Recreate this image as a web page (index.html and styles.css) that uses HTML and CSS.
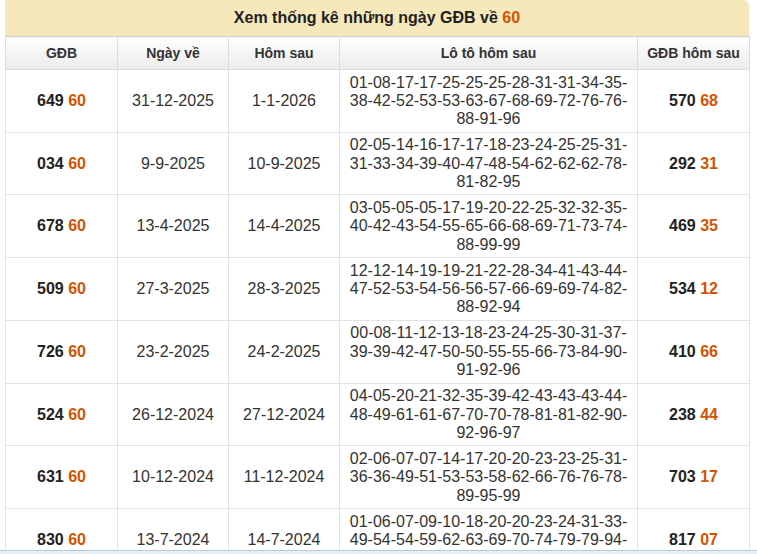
FILE: index.html
```html
<!DOCTYPE html>
<html lang="vi">
<head>
<meta charset="utf-8">
<link rel="stylesheet" href="styles.css">
</head>
<body>
<div class="wrap">
  <div class="title">Xem thống kê những ngày GĐB về <span class="hl">60</span></div>
  <table class="stats">
    <colgroup>
      <col class="c1"><col class="c2"><col class="c3"><col class="c4"><col class="c5">
    </colgroup>
    <thead>
      <tr><th>GĐB</th><th>Ngày về</th><th>Hôm sau</th><th>Lô tô hôm sau</th><th>GĐB hôm sau</th></tr>
    </thead>
    <tbody>
      <tr><td class="b">649 <span class="hl">60</span></td><td>31-12-2025</td><td>1-1-2026</td><td>01-<wbr>08-<wbr>17-<wbr>17-<wbr>25-<wbr>25-<wbr>25-<wbr>28-<wbr>31-<wbr>31-<wbr>34-<wbr>35-<wbr>38-<wbr>42-<wbr>52-<wbr>53-<wbr>53-<wbr>63-<wbr>67-<wbr>68-<wbr>69-<wbr>72-<wbr>76-<wbr>76-<wbr>88-<wbr>91-<wbr>96</td><td class="b">570 <span class="hl">68</span></td></tr>
      <tr><td class="b">034 <span class="hl">60</span></td><td>9-9-2025</td><td>10-9-2025</td><td>02-<wbr>05-<wbr>14-<wbr>16-<wbr>17-<wbr>17-<wbr>18-<wbr>23-<wbr>24-<wbr>25-<wbr>25-<wbr>31-<wbr>31-<wbr>33-<wbr>34-<wbr>39-<wbr>40-<wbr>47-<wbr>48-<wbr>54-<wbr>62-<wbr>62-<wbr>62-<wbr>78-<wbr>81-<wbr>82-<wbr>95</td><td class="b">292 <span class="hl">31</span></td></tr>
      <tr><td class="b">678 <span class="hl">60</span></td><td>13-4-2025</td><td>14-4-2025</td><td>03-<wbr>05-<wbr>05-<wbr>05-<wbr>17-<wbr>19-<wbr>20-<wbr>22-<wbr>25-<wbr>32-<wbr>32-<wbr>35-<wbr>40-<wbr>42-<wbr>43-<wbr>54-<wbr>55-<wbr>65-<wbr>66-<wbr>68-<wbr>69-<wbr>71-<wbr>73-<wbr>74-<wbr>88-<wbr>99-<wbr>99</td><td class="b">469 <span class="hl">35</span></td></tr>
      <tr><td class="b">509 <span class="hl">60</span></td><td>27-3-2025</td><td>28-3-2025</td><td>12-<wbr>12-<wbr>14-<wbr>19-<wbr>19-<wbr>21-<wbr>22-<wbr>28-<wbr>34-<wbr>41-<wbr>43-<wbr>44-<wbr>47-<wbr>52-<wbr>53-<wbr>54-<wbr>56-<wbr>56-<wbr>57-<wbr>66-<wbr>69-<wbr>69-<wbr>74-<wbr>82-<wbr>88-<wbr>92-<wbr>94</td><td class="b">534 <span class="hl">12</span></td></tr>
      <tr><td class="b">726 <span class="hl">60</span></td><td>23-2-2025</td><td>24-2-2025</td><td>00-<wbr>08-<wbr>11-<wbr>12-<wbr>13-<wbr>18-<wbr>23-<wbr>24-<wbr>25-<wbr>30-<wbr>31-<wbr>37-<wbr>39-<wbr>39-<wbr>42-<wbr>47-<wbr>50-<wbr>50-<wbr>55-<wbr>55-<wbr>66-<wbr>73-<wbr>84-<wbr>90-<wbr>91-<wbr>92-<wbr>96</td><td class="b">410 <span class="hl">66</span></td></tr>
      <tr><td class="b">524 <span class="hl">60</span></td><td>26-12-2024</td><td>27-12-2024</td><td>04-<wbr>05-<wbr>20-<wbr>21-<wbr>32-<wbr>35-<wbr>39-<wbr>42-<wbr>43-<wbr>43-<wbr>43-<wbr>44-<wbr>48-<wbr>49-<wbr>61-<wbr>61-<wbr>67-<wbr>70-<wbr>70-<wbr>78-<wbr>81-<wbr>81-<wbr>82-<wbr>90-<wbr>92-<wbr>96-<wbr>97</td><td class="b">238 <span class="hl">44</span></td></tr>
      <tr><td class="b">631 <span class="hl">60</span></td><td>10-12-2024</td><td>11-12-2024</td><td>02-<wbr>06-<wbr>07-<wbr>07-<wbr>14-<wbr>17-<wbr>20-<wbr>20-<wbr>23-<wbr>23-<wbr>25-<wbr>31-<wbr>36-<wbr>36-<wbr>49-<wbr>51-<wbr>53-<wbr>53-<wbr>58-<wbr>62-<wbr>66-<wbr>76-<wbr>76-<wbr>78-<wbr>89-<wbr>95-<wbr>99</td><td class="b">703 <span class="hl">17</span></td></tr>
      <tr><td class="b">830 <span class="hl">60</span></td><td>13-7-2024</td><td>14-7-2024</td><td>01-<wbr>06-<wbr>07-<wbr>09-<wbr>10-<wbr>18-<wbr>20-<wbr>20-<wbr>23-<wbr>24-<wbr>31-<wbr>33-<wbr>49-<wbr>54-<wbr>54-<wbr>59-<wbr>62-<wbr>63-<wbr>69-<wbr>70-<wbr>74-<wbr>79-<wbr>79-<wbr>94-<wbr>95-<wbr>97-<wbr>99</td><td class="b">817 <span class="hl">07</span></td></tr>
    </tbody>
  </table>
</div>
<div class="bottombar"></div>
</body>
</html>
```

FILE: styles.css
```css
html, body {
  margin: 0;
  padding: 0;
  background: #fff;
  font-family: "Liberation Sans", Arial, sans-serif;
  color: #333;
}
.wrap {
  margin-left: 5px;
  width: 744px;
}
.title {
  height: 36px;
  line-height: 36px;
  background: #f6e8ba;
  border-radius: 0 6px 0 0;
  text-align: center;
  font-weight: bold;
  font-size: 16px;
  color: #222;
}
.hl {
  color: #d35400;
}
.stats {
  width: 744px;
  border-collapse: collapse;
  table-layout: fixed;
}
.c1 { width: 112px; }
.c2 { width: 111px; }
.c3 { width: 111px; }
.c4 { width: 298px; }
.c5 { width: 112px; }
.stats th {
  height: 32px;
  padding: 0;
  font-size: 14px;
  font-weight: bold;
  color: #333;
  background: linear-gradient(#ffffff, #ebebeb);
  border: 1px solid #dcdcdc;
  border-top-color: #cfcfcf;
  text-align: center;
}
.stats td {
  height: 55px;
  padding: 3.5px 6px 3px;
  font-size: 16px;
  line-height: 18.4px;
  color: #333;
  border: 1px solid #e2e2e2;
  text-align: center;
  vertical-align: middle;
}
.stats td.b {
  font-weight: bold;
  color: #222;
}
.bottombar {
  position: fixed;
  left: 0;
  right: 0;
  top: 550px;
  height: 4px;
  background: #e7f0f6;
  border-top: 1px solid #bcc8d2;
}
```
